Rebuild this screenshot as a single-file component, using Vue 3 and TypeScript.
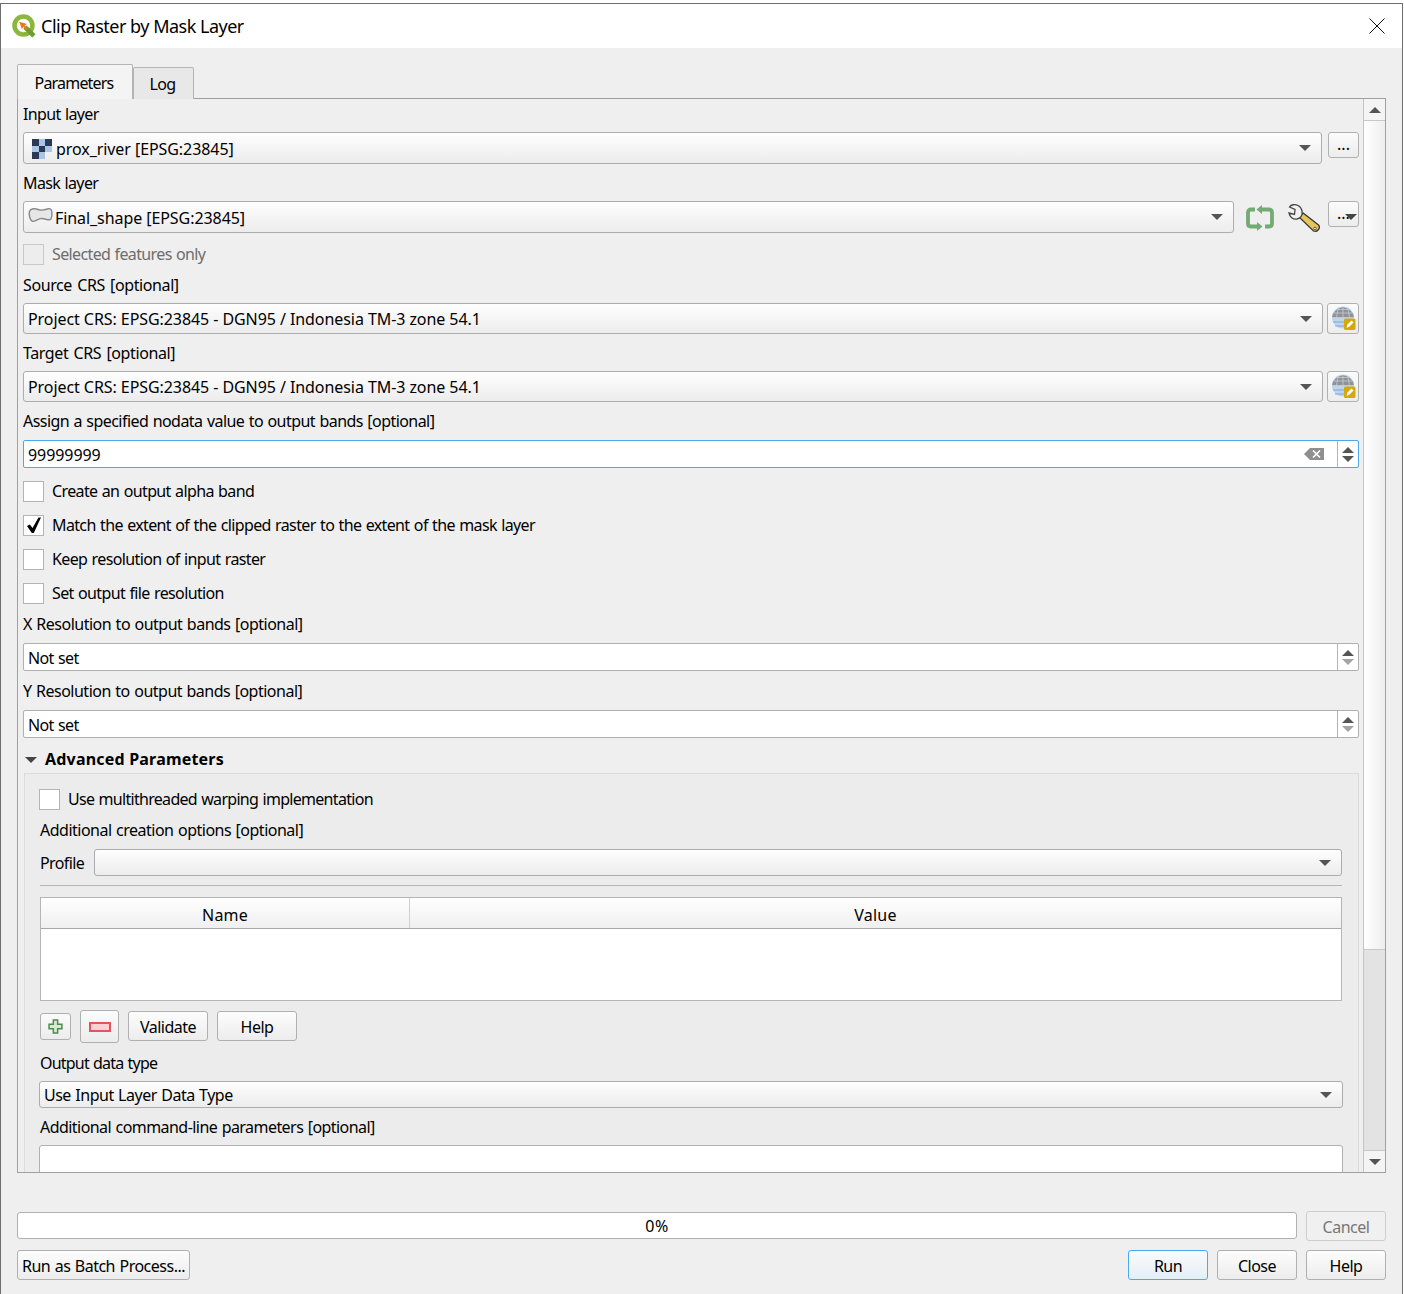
<script setup lang="ts">
const crs = 'Project CRS: EPSG:23845 - DGN95 / Indonesia TM-3 zone 54.1'
</script>

<template>
  <div class="window">
    <header class="titlebar">
      <svg class="logo" viewBox="0 0 24 24" aria-hidden="true">
        <circle cx="11" cy="11" r="8.600" fill="none" stroke="#8cb63c" stroke-width="4.400" />
        <path d="M12.500 12.500l8.500 8.500" stroke="#6f9e2f" stroke-width="4.400" />
        <path d="M7 7.500l7.500 2.200-2.400 1.300 3 3-1.300 1.300-3-3-1.300 2.400z" fill="#ee7913" />
      </svg>
      <span class="title">Clip Raster by Mask Layer</span>
      <svg class="close" viewBox="0 0 16 16" aria-hidden="true">
        <path d="M.5.5l15 15M15.500.5l-15 15" stroke="#111" stroke-width="1" fill="none" />
      </svg>
    </header>

    <div class="body">
      <div class="tabs">
        <div class="tab active">Parameters</div>
        <div class="tab log">Log</div>
      </div>

      <section class="pane">
        <div class="content">
          <div class="lbl first">Input layer</div>
          <div class="row">
            <div class="combo h32 grow">
              <svg class="raster" viewBox="0 0 3 3" shape-rendering="crispEdges" aria-hidden="true">
                <path d="M1 0h1v1H1zM0 1h1v1H0zM2 1h1v1H2zM1 2h1v1H1z" fill="#a9c5e8" />
                <path d="M0 0h1v1H0zM2 0h1v1H2zM1 1h1v1H1zM0 2h1v1H0z" fill="#2b3a52" />
              </svg>
              <span class="t-wide">prox_river [EPSG:23845]</span>
              <i class="arrow"></i>
            </div>
            <button class="dots">...</button>
          </div>

          <div class="lbl gap9">Mask layer</div>
          <div class="row">
            <div class="combo h32 grow">
              <svg class="shape" viewBox="0 0 24 16" aria-hidden="true">
                <path d="M1.500 4c1-3 5-3 9-1.500 3 1 6 0 9-1 2-.5 3.500 1 3.500 4 0 3 0 6-2 6.500-3 .5-5-1.500-9-1-3 .5-6 3.500-8 2.500-2-1-3.500-6-2.500-10z" fill="#e6e6e6" stroke="#8a8a8a" stroke-width="1.400" />
              </svg>
              <span class="t-wide">Final_shape [EPSG:23845]</span>
              <i class="arrow"></i>
            </div>
            <svg class="ico-refresh" viewBox="0 0 30 26" aria-hidden="true">
              <path d="M10 4.500H6Q3 4.500 3 7.500v11q0 3 3 3h8" fill="none" stroke="#72ab74" stroke-width="3.800" />
              <path d="M15 4.500h9q3 0 3 3v11q0 3-3 3h-4" fill="none" stroke="#72ab74" stroke-width="3.800" />
              <path d="M17 0v9l-5.500-4.500zM12 17v9l5.500-4.500z" fill="#72ab74" />
            </svg>
            <svg class="ico-wrench" viewBox="0 0 32 32" aria-hidden="true">
              <path d="M11.500 15.500l3.500-4.500 15.500 12q1.800 2.200 0 4.500-2.200 2.800-5 1.500z" fill="#e6c65c" stroke="#3a3a3a" stroke-width="1.300" />
              <path d="M10 3.500C7 2 3 2.500 1.500 5l5.500 2.500-.5 5L1 11c.5 4 4 6.500 8 6 3-.5 6-3 5-8-.5-3-2-4.500-4-5.500z" fill="#f2f2f2" stroke="#444" stroke-width="1.300" />
              <circle cx="27" cy="26.500" r="1.300" fill="#fff" stroke="#333" stroke-width=".8" />
            </svg>
            <button class="dots menu">...<i class="arrow small"></i></button>
          </div>

          <label class="check disabled mt11"><i class="box"></i><span>Selected features only</span></label>

          <div class="lbl gap10 t-crs">Source CRS [optional]</div>
          <div class="row">
            <div class="combo h31 grow pad"><span class="t-wide">{{ crs }}</span><i class="arrow"></i></div>
            <button class="crs">
              <svg viewBox="0 0 25 25" aria-hidden="true">
                <circle cx="12" cy="11.500" r="11" fill="#bcd6f2" />
                <path d="M1 11.500Q1.500 4 12 1q10.500 3 11 10.500z" fill="#8f9297" />
                <path d="M1 11.500h22M3 7h18M7 3.500h10M12 1v21M7 3q-3 8 0 18M17 3q3 8 0 18" fill="none" stroke="#cfd2d7" stroke-width=".7" />
                <path d="M2 16h19M4 20h15" fill="none" stroke="#5f93d3" stroke-width=".7" />
                <rect x="13" y="12.500" width="11.500" height="11.500" rx="1.500" fill="#d3a90b" />
                <path d="M15.500 22l1-3.500 4-4 2 2-4 4z" fill="#fff" />
              </svg>
            </button>
          </div>

          <div class="lbl gap9 t-crs">Target CRS [optional]</div>
          <div class="row">
            <div class="combo h31 grow pad"><span class="t-wide">{{ crs }}</span><i class="arrow"></i></div>
            <button class="crs">
              <svg viewBox="0 0 25 25" aria-hidden="true">
                <circle cx="12" cy="11.500" r="11" fill="#bcd6f2" />
                <path d="M1 11.500Q1.500 4 12 1q10.500 3 11 10.500z" fill="#8f9297" />
                <path d="M1 11.500h22M3 7h18M7 3.500h10M12 1v21M7 3q-3 8 0 18M17 3q3 8 0 18" fill="none" stroke="#cfd2d7" stroke-width=".7" />
                <path d="M2 16h19M4 20h15" fill="none" stroke="#5f93d3" stroke-width=".7" />
                <rect x="13" y="12.500" width="11.500" height="11.500" rx="1.500" fill="#d3a90b" />
                <path d="M15.500 22l1-3.500 4-4 2 2-4 4z" fill="#fff" />
              </svg>
            </button>
          </div>

          <div class="lbl gap9 assign">Assign a specified nodata value to output bands [optional]</div>
          <div class="spin focus">
            <span class="val t-wide">99999999</span>
            <svg class="clear" viewBox="0 0 20 14" aria-hidden="true">
              <path d="M6 1h14v12H6L0 7z" fill="#8f8f8f" />
              <path d="M9 3.500l7 7M16 3.500l-7 7" stroke="#fff" stroke-width="1.600" />
            </svg>
            <div class="steps"><i class="up"></i><i class="down"></i></div>
          </div>

          <label class="check mt13"><i class="box"></i><span>Create an output alpha band</span></label>
          <label class="check mt13">
            <i class="box">
              <svg viewBox="0 0 19 19" aria-hidden="true"><path d="M3 10l2.800-1.500L8.500 12 14.500 1.500H17L9.800 17H7.800z" fill="#000" /></svg>
            </i>
            <span>Match the extent of the clipped raster to the extent of the mask layer</span>
          </label>
          <label class="check mt13"><i class="box"></i><span>Keep resolution of input raster</span></label>
          <label class="check mt13"><i class="box"></i><span>Set output file resolution</span></label>

          <div class="lbl gap10 t-mid">X Resolution to output bands [optional]</div>
          <div class="spin"><span class="val">Not set</span><div class="steps"><i class="up"></i><i class="down dim"></i></div></div>
          <div class="lbl gap10 t-mid">Y Resolution to output bands [optional]</div>
          <div class="spin"><span class="val">Not set</span><div class="steps"><i class="up"></i><i class="down dim"></i></div></div>

          <div class="adv-title"><i class="arrow adv"></i>Advanced Parameters</div>

          <div class="group">
            <label class="check multi"><i class="box"></i><span>Use multithreaded warping implementation</span></label>
            <div class="lbl gap10 t-mid">Additional creation options [optional]</div>
            <div class="profile">
              <span>Profile</span>
              <div class="combo h27 grow"><i class="arrow"></i></div>
            </div>
            <div class="hr"></div>
            <div class="table">
              <div class="thead">
                <div class="th name">Name</div>
                <div class="th value">Value</div>
              </div>
            </div>
            <div class="tools">
              <button class="tool plus">
                <svg viewBox="0 0 14 14" aria-hidden="true"><path d="M5 1h4v4h4v4H9v4H5V9H1V5h4z" fill="#d8ead2" stroke="#4f8a4f" stroke-width="1.400" /></svg>
              </button>
              <button class="tool minus">
                <svg viewBox="0 0 22 10" aria-hidden="true"><rect x="1" y="1" width="20" height="8" fill="#f7d3d3" stroke="#e8525c" stroke-width="2" /></svg>
              </button>
              <button class="btn lift">Validate</button>
              <button class="btn lift">Help</button>
            </div>
            <div class="lbl gap10 t-tight">Output data type</div>
            <div class="combo h27 pad typecombo"><span class="t-mid">Use Input Layer Data Type</span><i class="arrow"></i></div>
            <div class="lbl gap9 cmd-lbl">Additional command-line parameters [optional]</div>
            <div class="cmd"></div>
          </div>
        </div>

        <div class="scrollbar">
          <div class="sb-btn top"><i class="up"></i></div>
          <div class="thumb"></div>
          <div class="track"></div>
          <div class="sb-btn bottom"><i class="down"></i></div>
        </div>
      </section>

      <div class="foot">
        <div class="progress"><span>0%</span></div>
        <button class="btn disabled-btn">Cancel</button>
      </div>
      <div class="foot second">
        <button class="btn batch t-mid">Run as Batch Process...</button>
        <div class="spacer"></div>
        <button class="btn primary">Run</button>
        <button class="btn">Close</button>
        <button class="btn">Help</button>
      </div>
    </div>
  </div>
</template>

<style>
html, body { margin: 0; background: #fff; }
</style>

<style scoped>
* { box-sizing: border-box; }
.window {
  width: 1403px; height: 1291px; margin-top: 3px;
  border: 1px solid #6e6e6e; border-bottom: 0;
  background: #efefef; color: #000;
  font: 16px/20px "Noto Sans", sans-serif;
  letter-spacing: -.63px; word-spacing: .8px;
  overflow: hidden;
}
.t-wide { letter-spacing: -.07px; word-spacing: 0; }
.t-mid { letter-spacing: -.5px; word-spacing: .8px; }
.t-crs { letter-spacing: -.4px; word-spacing: 1.500px; }
.t-tight { letter-spacing: -.8px; }
.assign { letter-spacing: -.55px; }
.cmd-lbl { letter-spacing: -.55px; }
.titlebar { height: 44px; background: #fff; display: flex; align-items: center; padding: 0 17px 0 11px; }
.logo { width: 25px; height: 25px; margin-right: 4px; }
.title { flex: 1; font-size: 18px; letter-spacing: -.5px; word-spacing: 0; }
.close { width: 16px; height: 16px; }
.body { padding: 16px 16px 0 16px; }
.tabs { display: flex; height: 35px; }
.tab { width: 61px; height: 32px; margin-top: 3px; border: 1px solid #b4b4b4; border-bottom: 0; border-radius: 2px 2px 0 0; background: #e8e8e8; text-align: center; line-height: 32px; }
.tab.log { padding-right: 2px; }
.tab.active { width: 116px; height: 35px; margin-top: 0; padding-right: 2px; background: #f4f4f4; line-height: 36px; letter-spacing: -.8px; position: relative; z-index: 1; }
.pane { height: 1075px; border: 1px solid #a0a0a0; display: flex; overflow: hidden; margin-top: -1px; }
.content { flex: 1; min-width: 0; height: 1073px; padding: 0 4px 0 5px; overflow: hidden; }
.lbl { height: 20px; margin-bottom: 8px; white-space: nowrap; }
.first { margin-top: 5px; }
.gap9 { margin-top: 9px; }
.gap10 { margin-top: 10px; }
.row { display: flex; align-items: flex-start; }
.grow { flex: 1; min-width: 0; }
.combo {
  position: relative; display: flex; align-items: center;
  border: 1px solid #adadad; border-radius: 3px;
  background: linear-gradient(#fefefe, #ececec);
}
.h32 { height: 32px; padding: 1px 0 0 8px; }
.h31 { height: 31px; }
.h27 { height: 27px; }
.pad { padding-left: 4px; }
.arrow { position: absolute; right: 10px; top: 50%; margin-top: -3px; width: 0; height: 0; border: 6px solid transparent; border-top: 6px solid #555; border-bottom: 0; }
.raster { width: 20px; height: 20px; margin: 0 4px 0 0; flex: none; }
.shape { width: 25px; height: 17px; margin: 0 2px 5px -4px; flex: none; }
.dots {
  width: 31px; height: 26px; margin-left: 6px; padding: 0 0 2px; position: relative;
  border: 1px solid #b0b0b0; border-radius: 3px;
  background: linear-gradient(#fbfbfb, #ececec);
  font: 16px/16px "Noto Sans", sans-serif; color: #000; letter-spacing: 0;
}
.dots.menu { text-align: left; padding-left: 8px; }
.arrow.small { right: 1px; top: 12px; margin: 0; border-width: 6px; border-top: 6px solid #444; border-bottom: 0; }
.ico-refresh { width: 30px; height: 26px; margin: 4px 13px 0 11px; flex: none; }
.ico-wrench { width: 32px; height: 32px; margin: 1px 2px -1px 0; flex: none; }
.crs {
  width: 32px; height: 31px; margin-left: 4px; padding: 2px 2px 2px 3px;
  border: 1px solid #b0b0b0; border-radius: 3px; background: linear-gradient(#fbfbfb, #ececec);
}
.crs svg { display: block; width: 25px; height: 25px; }
.check { display: flex; align-items: center; height: 21px; }
.check span { margin-top: -2px; }
.box { width: 21px; height: 21px; border: 1px solid #b4b4b4; background: #fff; margin-right: 8px; flex: none; display: block; }
.box svg { display: block; width: 19px; height: 19px; }
.mt11 { margin-top: 11px; }
.mt13 { margin-top: 13px; }
.disabled { color: #6d6d6d; }
.disabled .box { background: #ededed; border-color: #c8c8c8; }
.spin {
  height: 28px; margin-top: 9px; display: flex; align-items: center; position: relative;
  border: 1px solid #b0b0b0; border-radius: 2px; background: #fff; padding: 2px 0 0 4px;
}
.spin.focus { border-color: #4aa8ef; }
.val { flex: 1; }
.clear { width: 20px; height: 14px; margin: -2px 13px 0 0; }
.steps { width: 21px; margin-top: -2px; align-self: stretch; border-left: 1px solid #b4b4b4; display: flex; flex-direction: column; align-items: center; justify-content: center; gap: 3px; }
.up, .down { display: block; width: 0; height: 0; border: 6px solid transparent; border-top: 0; border-bottom: 6px solid #555; }
.down { border-bottom: 0; border-top: 6px solid #555; }
.down.dim { border-top-color: #a4a4a4; }
.adv-title { height: 20px; margin-top: 11px; display: flex; align-items: center; font-weight: 700; letter-spacing: .2px; word-spacing: 0; padding-left: 22px; position: relative; }
.arrow.adv { left: 2px; right: auto; margin-top: -2px; border-top-color: #444; }
.group { margin: 4px 0 0 1px; padding: 15px 16px 0 15px; border: 1px solid #dcdcdc; border-bottom: 0; background: #ececec; height: 420px; }
.multi { margin-left: -1px; letter-spacing: -.7px; }
.profile { display: flex; align-items: center; gap: 10px; margin-top: 9px; }
.hr { height: 1px; background: #b5b5b5; margin: 9px 0 11px; }
.table { height: 104px; border: 1px solid #b5b5b5; background: #fff; }
.thead { display: flex; height: 31px; border-bottom: 1px solid #a8a8a8; background: linear-gradient(#fff, #f0f0f0); letter-spacing: .2px; }
.th { text-align: center; line-height: 34px; }
.name { width: 369px; border-right: 1px solid #d0d0d0; }
.value { flex: 1; }
.tools { display: flex; align-items: center; margin-top: 9px; height: 33px; }
.tool { padding: 0; display: flex; align-items: center; justify-content: center; border: 1px solid #b0b0b0; border-radius: 3px; background: linear-gradient(#fbfbfb, #ececec); }
.plus { width: 31px; height: 27px; }
.plus svg { width: 15px; height: 15px; }
.minus { width: 39px; height: 33px; margin: 0 9px 0 9px; }
.minus svg { width: 22px; height: 10px; }
.btn {
  width: 80px; height: 30px; padding: 1px 0 0; white-space: nowrap;
  border: 1px solid #b0b0b0; border-radius: 3px;
  background: linear-gradient(#fdfdfd, #ececec);
  font: 16px/20px "Noto Sans", sans-serif; color: #000; letter-spacing: -.5px; word-spacing: .8px;
}
.lift { margin-top: -1px; padding-top: 2px; }
.tools .btn + .btn { margin-left: 9px; }
.typecombo { width: 1304px; margin-left: -1px; }
.cmd { width: 1304px; height: 40px; margin-left: -1px; border: 1px solid #b0b0b0; border-radius: 3px 3px 0 0; background: #fff; }
.scrollbar { width: 22px; height: 1073px; border-left: 1px solid #c4c4c4; display: flex; flex-direction: column; background: #e3e3e3; flex: none; }
.sb-btn { height: 22px; background: #f4f4f4; display: flex; align-items: center; justify-content: center; flex: none; }
.sb-btn.top { border-bottom: 1px solid #c8c8c8; }
.sb-btn.bottom { border-top: 1px solid #c8c8c8; }
.thumb { height: 829px; background: linear-gradient(90deg, #fff, #eee); border-bottom: 1px solid #c8c8c8; flex: none; }
.track { flex: 1; }
.foot { display: flex; align-items: flex-start; margin-top: 38px; height: 30px; gap: 9px; }
.progress { flex: 1; height: 27px; margin-top: 1px; border: 1px solid #b0b0b0; border-radius: 3px; background: #fff; text-align: center; line-height: 26px; letter-spacing: .5px; }
.disabled-btn { color: #777; border-color: #cdcdcd; background: #f0f0f0; }
.second { margin-top: 9px; }
.spacer { flex: 1; }
.batch { width: 173px; }
.primary { border-color: #4aa8ef; background: linear-gradient(#f9fbfd, #e6eef5); }
</style>
